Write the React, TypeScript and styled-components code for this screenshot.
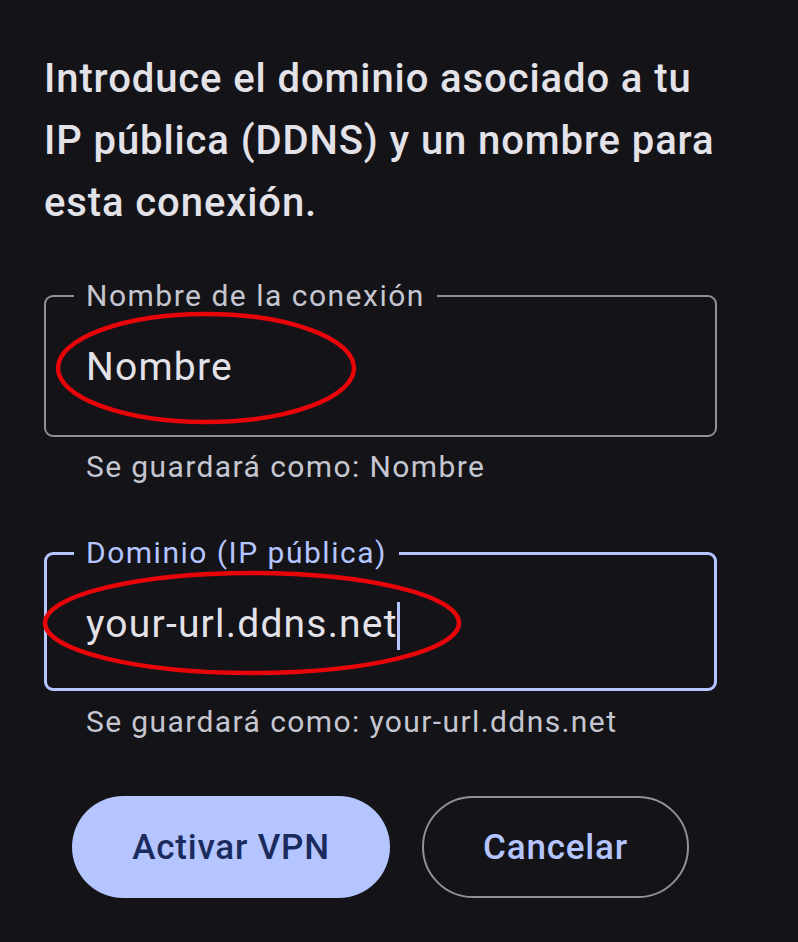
import React from "react";
import styled, { createGlobalStyle } from "styled-components";

const Global = createGlobalStyle`
  html, body { margin: 0; padding: 0; background: #131318; }
  body { font-family: Roboto, "Noto Sans", sans-serif; }
`;

const Page = styled.div`
  width: 798px;
  height: 942px;
  background: #131318;
  box-sizing: border-box;
  padding: 48px 81px 0 44px;
  display: flex;
  flex-direction: column;
  position: relative;
  overflow: hidden;
`;

const Intro = styled.p`
  margin: 0;
  color: #e4e2e9;
  font-size: 40px;
  line-height: 62px;
  font-weight: 500;
  letter-spacing: 0.9px;
`;

const FieldBlock = styled.div<{ $top: number }>`
  margin-top: ${(p) => p.$top}px;
  display: flex;
  flex-direction: column;
`;

const Fieldset = styled.fieldset<{ $focused?: boolean; $h: number }>`
  margin: 0;
  height: ${(p) => p.$h}px;
  box-sizing: border-box;
  border: ${(p) => (p.$focused ? "3px solid #b4c5ff" : "2px solid #8f9099")};
  border-radius: 9px;
  padding: 0 0 0 ${(p) => (p.$focused ? 39 : 40)}px;
  min-width: 0;
`;

const Legend = styled.legend<{ $focused?: boolean }>`
  padding: 0 12px;
  margin-left: -12px;
  font-size: 30px;
  line-height: 30px;
  letter-spacing: 1.5px;
  color: ${(p) => (p.$focused ? "#b4c5ff" : "#c5c6d0")};
`;

const Value = styled.div<{ $pt: number }>`
  padding-top: ${(p) => p.$pt}px;
  font-size: 39px;
  line-height: 46px;
  color: #e4e2e9;
  display: flex;
  align-items: center;
  letter-spacing: 1.2px;
`;

const Caret = styled.span`
  display: inline-block;
  width: 3px;
  height: 48px;
  background: #b4c5ff;
  margin: 5px 0 0 -1px;
`;

const Helper = styled.div<{ $top: number }>`
  margin: ${(p) => p.$top}px 0 0 42px;
  font-size: 30px;
  line-height: 36px;
  color: #c5c6d0;
  letter-spacing: 1.4px;
`;

const Actions = styled.div`
  margin-top: 56px;
  margin-left: 28px;
  display: flex;
  gap: 32px;
`;

const Button = styled.button<{ $primary?: boolean }>`
  height: 102px;
  border-radius: 51px;
  box-sizing: border-box;
  font-family: Roboto, sans-serif;
  font-size: 35px;
  font-weight: 500;
  letter-spacing: 0.8px;
  cursor: pointer;
  padding: 0;
  width: ${(p) => (p.$primary ? 318 : 267)}px;
  background: ${(p) => (p.$primary ? "#b4c5ff" : "transparent")};
  color: ${(p) => (p.$primary ? "#1b2b5e" : "#b4c5ff")};
  border: ${(p) => (p.$primary ? "none" : "2px solid #8f9099")};
`;

const Annotation = styled.svg`
  position: absolute;
  left: 0;
  top: 0;
  pointer-events: none;
`;

export default function App() {
  return (
    <>
      <Global />
      <Page>
        <Intro>
          Introduce el dominio asociado a tu IP pública (DDNS) y un nombre para
          esta conexión.
        </Intro>

        <FieldBlock $top={47}>
          <Fieldset $h={156}>
            <Legend>Nombre de la conexión</Legend>
            <Value $pt={33}>Nombre</Value>
          </Fieldset>
          <Helper $top={12}>Se guardará como: Nombre</Helper>
        </FieldBlock>

        <FieldBlock $top={53}>
          <Fieldset $focused $h={153}>
            <Legend $focused>Dominio (IP pública)</Legend>
            <Value $pt={29}>
              your-url.ddns.net
              <Caret />
            </Value>
          </Fieldset>
          <Helper $top={13}>Se guardará como: your-url.ddns.net</Helper>
        </FieldBlock>

        <Actions>
          <Button $primary>Activar VPN</Button>
          <Button>Cancelar</Button>
        </Actions>

        <Annotation width="798" height="942" viewBox="0 0 798 942">
          <ellipse cx="206" cy="368" rx="148" ry="54" fill="none" stroke="#e8050a" strokeWidth="4.5" />
          <ellipse cx="252" cy="623" rx="207" ry="50" fill="none" stroke="#e8050a" strokeWidth="4.5" />
        </Annotation>
      </Page>
    </>
  );
}
